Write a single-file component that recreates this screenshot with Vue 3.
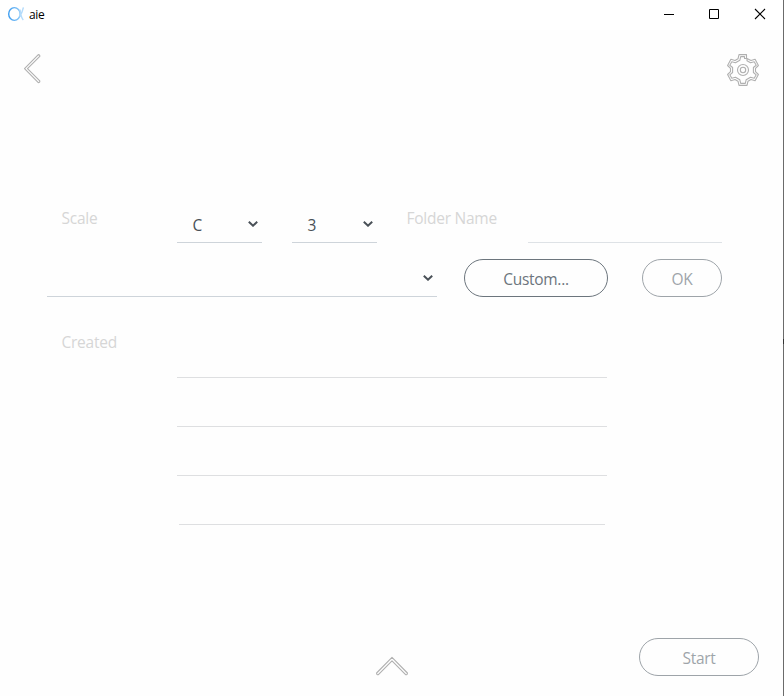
<script setup>
import { ref } from 'vue'

const note = ref('C')
const octave = ref('3')
const rows = [1, 2, 3, 4]
</script>

<template>
  <div class="window">
    <header class="titlebar">
      <svg class="logo" width="16" height="16" viewBox="0 0 16 16" fill="none">
        <defs>
          <linearGradient id="alpha" x1="0" y1="0" x2="1" y2="0">
            <stop offset="0" stop-color="#3d9df0" />
            <stop offset="1" stop-color="#8cc8f8" />
          </linearGradient>
        </defs>
        <ellipse cx="6.400" cy="8" rx="5.700" ry="6.400" stroke="url(#alpha)" stroke-width="1.400" />
        <path d="M15.400 1.500C14.700 5 13.400 8 11.700 10.500M12 3.500C12.600 8 13.200 12 15.300 14" stroke="#b5dcfb" stroke-width="1.400" />
      </svg>
      <span class="title">aie</span>
      <div class="controls">
        <svg width="46" height="29" viewBox="0 0 46 29"><path d="M10 14.500h10" stroke="#000" /></svg>
        <svg width="46" height="29" viewBox="0 0 46 29"><path d="M9.500 9.500h9v9h-9z" fill="none" stroke="#000" /></svg>
        <svg width="46" height="29" viewBox="0 0 46 29"><path d="M9 9l10 10M19 9L9 19" stroke="#000" stroke-width="1.100" /></svg>
      </div>
    </header>

    <nav class="toolbar">
      <svg width="18" height="32" viewBox="0 0 18 32" fill="none" stroke="#b0b0b0" stroke-width="1.100" stroke-linejoin="round">
        <path d="M14.300 .6L.5 14.600L14.300 28.600Q16 28.600 15.800 26.800L3.500 14.600L15.800 2.400Q16 .6 14.300 .6Z" />
      </svg>
      <svg width="32" height="32" viewBox="0 0 32 32" fill="none" stroke="#b0b0b0" stroke-width="1.100" stroke-linejoin="round">
        <path d="M19.500 4.500V.6H12L11 4.800L8 6.500L3.900 5.300L.6 11.500L3.500 14.300V17.700L.6 20.500L3.900 26.700L8 25.500L11 27.200L12 31.400H20L21 27.200L24 25.500L28.100 26.700L31.400 20.500L28.500 17.700V14.300L31.400 11.500L28.100 5.300L24 6.500L20 4.500V6.700L23.500 8.800L27.200 7.800L29.200 11.200L26.400 13.500V18.500L29.200 20.800L27.200 24.200L23.500 23.200L19.200 25.700L18.300 29.400H13.700L12.800 25.700L8.500 23.200L4.800 24.200L2.800 20.800L5.600 18.500V13.500L2.800 11.200L4.800 7.800L8.500 8.800L12.800 6.300L13.700 2.600H17.500V4.500Z" />
        <circle cx="16" cy="16" r="5.500" />
        <circle cx="16" cy="16" r="2.700" />
      </svg>
    </nav>

    <main class="form">
      <section class="row">
        <span class="label scale-label">Scale</span>
        <div class="select small">
          <span class="value">{{ note }}</span>
          <svg class="caret" width="10" height="6" viewBox="0 0 10 6"><path d="M.8 .8L5 4.700L9.200 .8" /></svg>
        </div>
        <div class="select small octave">
          <span class="value">{{ octave }}</span>
          <svg class="caret" width="10" height="6" viewBox="0 0 10 6"><path d="M.8 .8L5 4.700L9.200 .8" /></svg>
        </div>
        <span class="label folder-label">Folder Name</span>
        <div class="folder-input"></div>
      </section>

      <section class="row">
        <div class="select wide">
          <svg class="caret" width="10" height="6" viewBox="0 0 10 6"><path d="M.8 .8L5 4.700L9.200 .8" /></svg>
        </div>
        <button class="pill custom">Custom...</button>
        <button class="pill ok">OK</button>
      </section>

      <section class="created">
        <span class="label created-label">Created</span>
        <div class="lines">
          <div v-for="r in rows" :key="r" class="line"></div>
        </div>
      </section>
    </main>

    <footer class="footer">
      <svg class="up" width="33" height="20" viewBox="0 0 33 20" fill="none" stroke="#b0b0b0" stroke-width="1.100" stroke-linejoin="round">
        <path d="M.6 17L16 1.300L31.400 17Q31.500 18.800 29.600 18.700L16 4.900L2.400 18.700Q.5 18.800 .6 17Z" />
      </svg>
      <button class="pill start">Start</button>
    </footer>
  </div>
</template>

<style>
body {
  margin: 0;
  background: #fefefe;
}
</style>

<style scoped>
.window {
  box-sizing: border-box;
  width: 784px;
  height: 696px;
  display: flex;
  flex-direction: column;
  border: 0 solid #6b6b6b;
  border-right-width: 1px;
  border-image: linear-gradient(#6b6b6b 339px, #333 339px, #333 344px, #6b6b6b 344px) 1;
  background: #fefefe;
  font-family: "Open Sans", "Noto Sans", sans-serif;
  font-size: 15.5px;
  letter-spacing: -0.25px;
}
.titlebar {
  height: 30px;
  display: flex;
  align-items: flex-start;
  background: #fff;
}
.logo {
  margin: 6px 0 0 8px;
}
.title {
  margin: 6px 0 0 5px;
  font-size: 12px;
  line-height: 17px;
  letter-spacing: -0.3px;
  color: #000;
}
.controls {
  display: flex;
  margin-left: auto;
  margin-right: -9px;
}
.toolbar {
  height: 62px;
  box-sizing: border-box;
  padding: 24px 24px 0 24px;
  display: flex;
  justify-content: space-between;
}
.form {
  padding: 113px 0 0 47px;
}
.row {
  display: flex;
  height: 54px;
}
.label {
  color: #d6d6d6;
  line-height: 26px;
  box-sizing: border-box;
  padding-left: 14.5px;
  white-space: nowrap;
}
.scale-label {
  width: 130px;
}
.select {
  box-sizing: border-box;
  height: 38px;
  border-bottom: 1px solid #ced4da;
  display: flex;
  align-items: center;
  color: #495057;
}
.small {
  width: 85px;
  padding: 0 4px 0 15.5px;
}
.value {
  padding-top: 2px;
}
.octave {
  margin-left: 30px;
}
.caret {
  margin-left: auto;
  fill: none;
  stroke: #495057;
  stroke-width: 2;
}
.folder-label {
  width: 151px;
  padding-left: 29.5px;
}
.folder-input {
  box-sizing: border-box;
  width: 194px;
  height: 38px;
  border-bottom: 1px solid #dee2e6;
}
.wide {
  width: 390px;
  padding-right: 4px;
}
.pill {
  box-sizing: border-box;
  height: 38px;
  border: 1px solid #6c757d;
  border-radius: 19px;
  padding: 2px 0 0;
  background: transparent;
  color: #6c757d;
  font: inherit;
  letter-spacing: -0.3px;
}
.custom {
  width: 144px;
  margin-left: 27px;
}
.ok {
  width: 80px;
  margin-left: 34px;
  opacity: 0.65;
}
.created {
  display: flex;
  padding-top: 16px;
}
.created-label {
  width: 130px;
}
.lines {
  width: 430px;
}
.line {
  box-sizing: border-box;
  height: 49px;
  border-bottom: 1px solid #dedfe1;
}
.line:last-child {
  margin: 0 2px;
}
.footer {
  margin-top: auto;
  height: 58px;
  display: flex;
}
.up {
  margin: 18px 0 0 376px;
}
.start {
  width: 120px;
  margin: 0 24px 0 auto;
  opacity: 0.65;
}
</style>
